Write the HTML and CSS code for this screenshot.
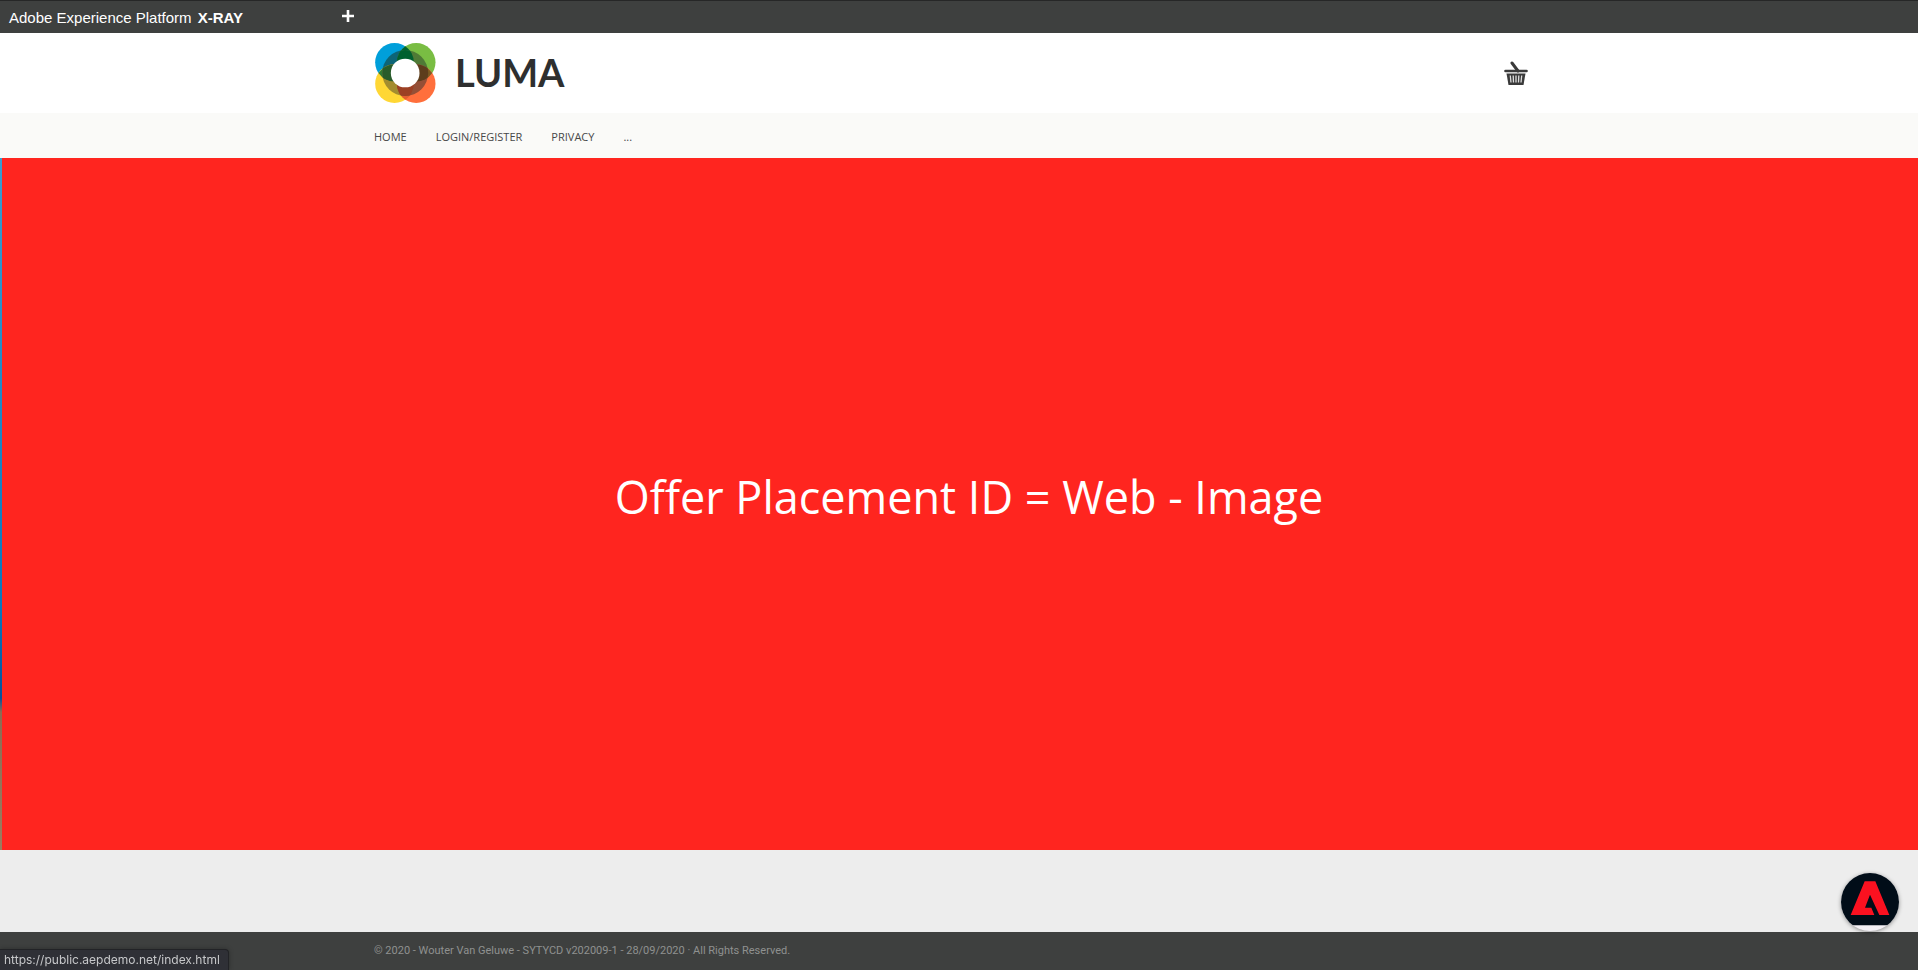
FILE: index.html
```html
<!DOCTYPE html>
<html lang="en">
<head>
<meta charset="utf-8">
<title>Luma</title>
<link rel="stylesheet" href="styles.css">
</head>
<body>
<div class="xray">
  <span class="xray-title">Adobe Experience Platform <b>X-RAY</b></span>
  <button class="xray-toggle" type="button" aria-label="Expand X-ray panel">
    <svg width="12" height="12" viewBox="0 0 12 12"><path d="M6 0v12M0 6h12" stroke="#fff" stroke-width="2.600"/></svg>
  </button>
</div>
<header class="header">
  <div class="container header-row">
    <a class="logo" href="#">
      <svg class="logo-mark" viewBox="45 39 182 180" aria-hidden="true">
        <defs><clipPath id="ring"><circle cx="135" cy="129" r="69"/></clipPath></defs>
        <circle cx="103" cy="97" r="58" fill="#009fda"/>
        <circle cx="168" cy="97" r="58" fill="#79bd43"/>
        <circle cx="103" cy="161" r="58" fill="#ffd735"/>
        <circle cx="168" cy="161" r="58" fill="#ff6f3c"/>
        <path d="M135.500 49a58 58 0 0 1 0 96a58 58 0 0 1 0-96z" fill="#00632f"/>
        <path d="M55 129a58 58 0 0 1 96 0a58 58 0 0 1-96 0z" fill="#2f7a34"/>
        <path d="M216 129a58 58 0 0 1-96 0a58 58 0 0 1 96 0z" fill="#7b5a22"/>
        <path d="M135.500 209a58 58 0 0 1 0-96a58 58 0 0 1 0 96z" fill="#e2602f"/>
        <g clip-path="url(#ring)">
          <circle cx="103" cy="97" r="58" fill="#0d6577"/>
          <circle cx="168" cy="97" r="58" fill="#4f7a36"/>
          <circle cx="103" cy="161" r="58" fill="#a38c2f"/>
          <circle cx="168" cy="161" r="58" fill="#944f36"/>
          <path d="M55 129a58 58 0 0 1 96 0a58 58 0 0 1-96 0z" fill="#285c2b"/>
          <path d="M216 129a58 58 0 0 1-96 0a58 58 0 0 1 96 0z" fill="#5d3d1c"/>
          <path d="M135.500 49a58 58 0 0 1 0 96a58 58 0 0 1 0-96z" fill="#00602f"/>
          <path d="M135.500 209a58 58 0 0 1 0-96a58 58 0 0 1 0 96z" fill="#9c4024"/>
        </g>
        <circle cx="135" cy="129" r="43" fill="#fff"/>
      </svg>
      <span class="logo-name">LUMA</span>
    </a>
    <button class="cart" type="button" aria-label="Basket">
      <svg width="24" height="24" viewBox="0 0 24 24">
        <path d="M8 2l6 8" stroke="#3a3a3a" stroke-width="3" stroke-linecap="round"/>
        <path d="M1.500 10h21" stroke="#3a3a3a" stroke-width="2.600" stroke-linecap="round"/>
        <path d="M2.500 12.500h19L19.500 24h-15z" fill="#3a3a3a"/>
        <path d="M6.300 14.500l.7 7M9.200 14.500l.3 7M12 14.500v7M14.800 14.500l-.3 7M17.700 14.500l-.7 7" stroke="#ddd" stroke-width="1.300"/>
      </svg>
    </button>
  </div>
</header>
<nav class="nav">
  <div class="container nav-row">
    <a href="#">HOME</a><a href="#">LOGIN/REGISTER</a><a href="#">PRIVACY</a><a href="#">...</a>
  </div>
</nav>
<main class="banner"><h1>Offer Placement ID = Web - Image</h1></main>
<div class="spacer"></div>
<footer class="footer">
  <div class="container">© 2020 - Wouter Van Geluwe - SYTYCD v202009-1 - 28/09/2020 · All Rights Reserved.</div>
</footer>
<button class="fab" type="button" aria-label="Adobe">
  <svg width="58" height="58" viewBox="0 0 174 174"><path d="M0 0h174v157H0z" fill="#010d18"/><path d="M71 25h32l42 101h-30L87 65 72 104h19l9 22H29z" fill="#fb1120"/></svg>
</button>
<div class="status">https://public.aepdemo.net/index.html</div>
</body>
</html>
```
FILE: styles.css
```css
* { box-sizing: border-box; }
body {
  margin: 0;
  min-height: 100vh;
  display: flex;
  flex-direction: column;
  font-family: "Open Sans", "Noto Sans", sans-serif;
  background: #fff;
}
a { color: inherit; text-decoration: none; }
button { border: 0; padding: 0; background: none; display: flex; }
.container { width: 100%; max-width: 1170px; margin: 0 auto; }
.xray {
  height: 33px;
  display: flex;
  align-items: center;
  padding: 0 9px 2px;
  border-top: 1px solid #262727;
  background: #3e403f;
  color: #fff;
  font: 15px/20px "Liberation Sans", Arial, sans-serif;
}
.xray-title { width: 333px; padding-top: 4px; }
.xray-title b { margin-left: 2px; }
.header-row { height: 80px; display: flex; align-items: center; justify-content: space-between; }
.logo { display: flex; align-items: center; gap: 19px; }
.logo-mark { width: 61px; height: 60px; margin-left: 1px; }
.logo-name { padding-bottom: 2px; font: 700 38px/40px Lato, sans-serif; color: #2e2f2f; }
.cart { margin-right: 16px; }
.nav { background: #fafaf8; }
.nav-row { height: 45px; display: flex; align-items: center; gap: 29px; font-size: 11px; color: #484848; padding-top: 2px; }
.banner {
  flex: 1;
  display: flex;
  align-items: center;
  justify-content: center;
  padding: 0 0 14px 18px;
  border-left: 2px solid;
  border-image: linear-gradient(#3a9dd0, #0878bd 65%, #07519a 78%, #8c6c53 80%, #9c7c60) 1;
  border-image-width: 0 0 0 2px;
  background: #ff251f;
}
.banner h1 { margin: 0; font-size: 45px; line-height: 60px; font-weight: 400; color: #fff; }
.spacer { height: 82px; background: #ededed; }
.footer { height: 38px; padding-top: 11px; background: #3e403f; color: #8f9190; font: 11px/16px Roboto, sans-serif; }
.fab {
  position: fixed;
  right: 19px;
  bottom: 39px;
  border-radius: 50%;
  overflow: hidden;
  background: #f3f0f5;
  box-shadow: 0 1px 4px rgba(0, 0, 0, .4);
}
.status {
  position: fixed;
  left: 0;
  bottom: 0;
  padding: 1px 8px 2px 4px;
  border-top: 1px solid #222326;
  border-right: 1px solid #222326;
  border-top-right-radius: 4px;
  background: #2f3036;
  color: #c6c7c9;
  font: 12px/17px Inter, sans-serif;
  box-shadow: 0 0 5px rgba(0, 0, 0, .3);
}
```
